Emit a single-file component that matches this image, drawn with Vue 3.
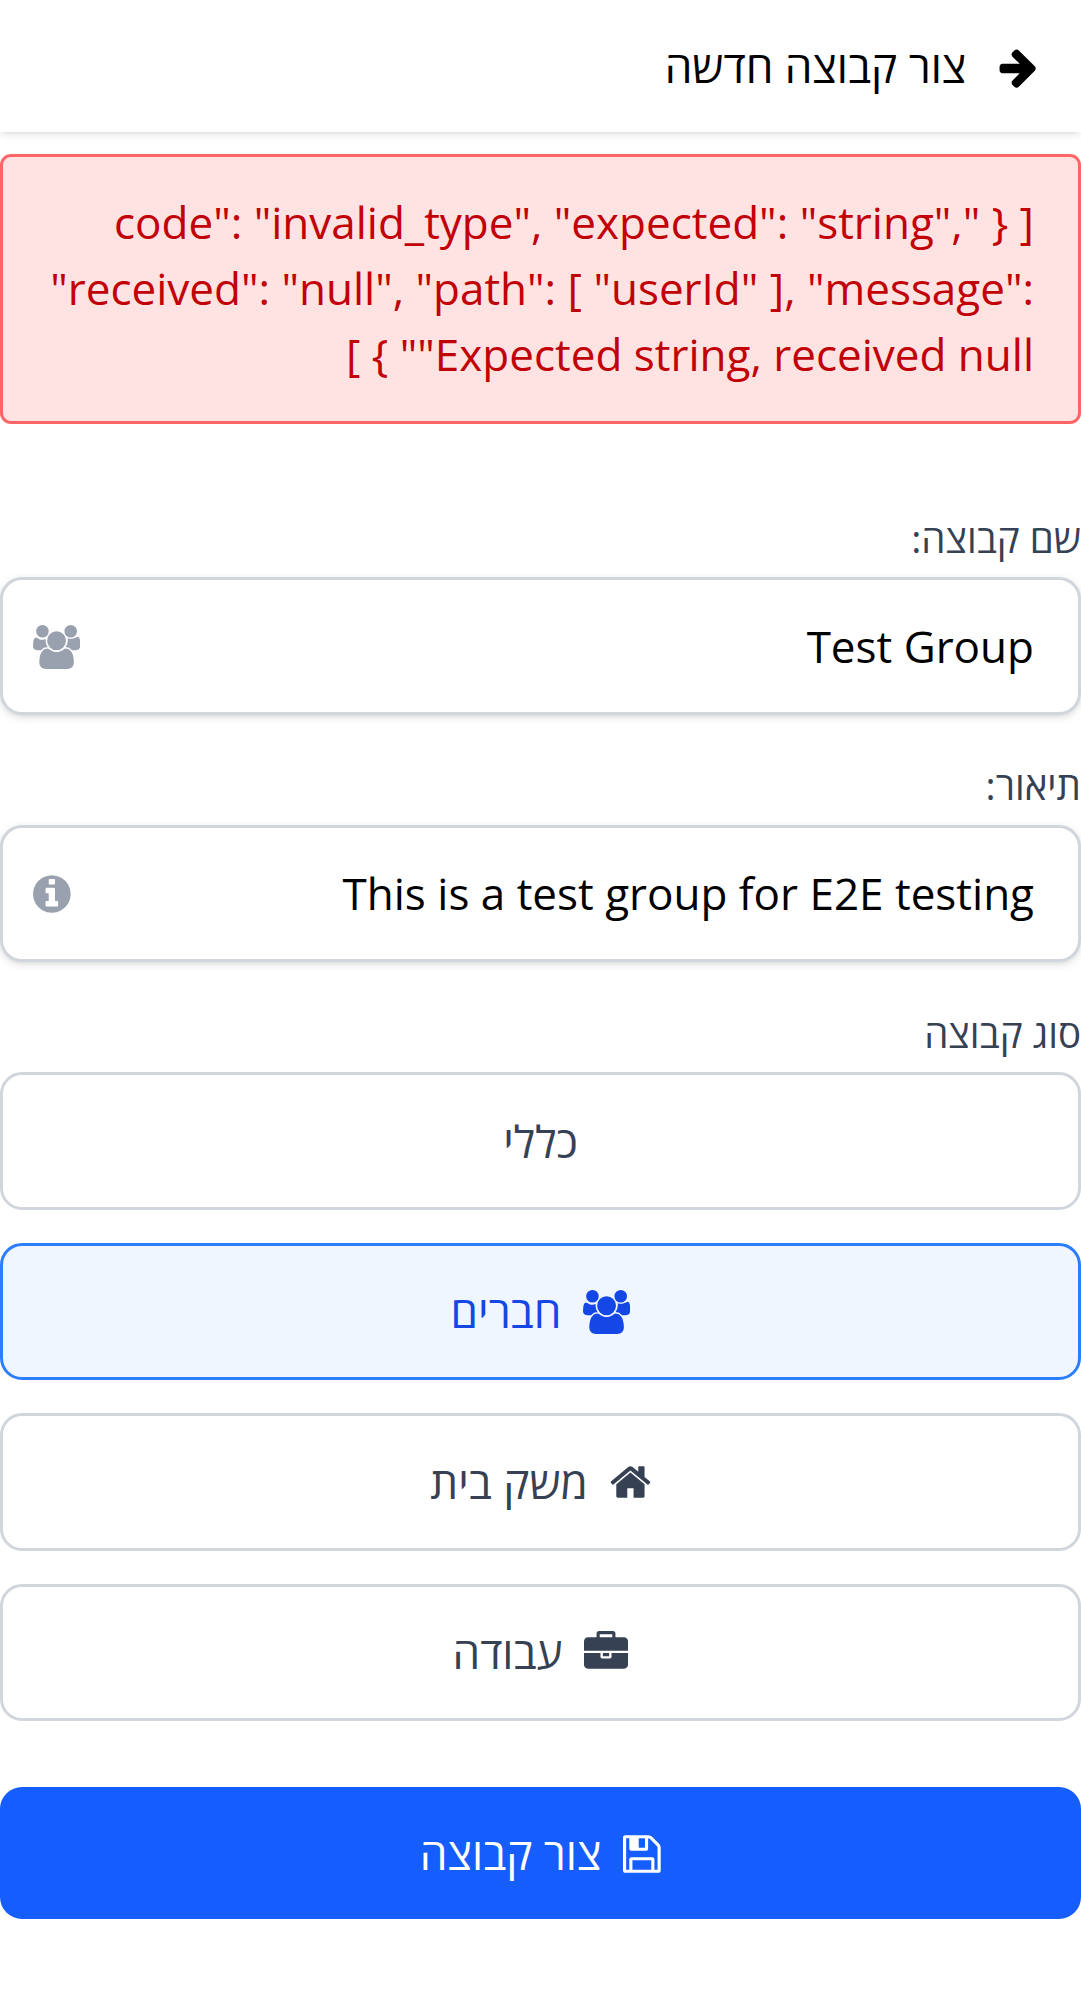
<script setup>
import { ref } from 'vue'

const error = `[
  {
    "code": "invalid_type",
    "expected": "string",
    "received": "null",
    "path": [ "userId" ],
    "message": "Expected string, received null"
  }
]`

const icons = {
  arrow: {
    box: '64 0 1536 1792',
    d: 'M1600 960q0 54-37 91l-651 651q-39 37-91 37-51 0-90-37l-75-75q-38-38-38-91t38-91l293-293h-704q-52 0-84.5-37.5t-32.5-90.5v-128q0-53 32.5-90.5t84.5-37.5h704l-293-294q-38-36-38-90t38-90l75-75q38-38 90-38 53 0 91 38l651 651q37 35 37 90z',
  },
  users: {
    box: '0 0 1920 1792',
    d: 'M593 896q-162 5-265 128h-134q-82 0-138-40.5t-56-118.5q0-353 124-353 6 0 43.5 21t97.5 42.5 119 21.5q67 0 133-23-5 37-5 66 0 159 93 290zm1071 637q0 120-73 189.5t-194 69.5h-874q-121 0-194-69.5t-73-189.5q0-53 3.5-103.5t14-109 26.5-108.5 43-97.5 62-81 85.5-53.5 111.5-20q10 0 43 21.5t73 48 107 48 135 21.5 135-21.5 107-48 73-48 43-21.5q61 0 111.5 20t85.5 53.5 62 81 43 97.5 26.5 108.5 14 109 3.5 103.5zm-1024-1277q0 106-75 181t-181 75-181-75-75-181 75-181 181-75 181 75 75 181zm704 384q0 159-112.5 271.5t-271.5 112.5-271.5-112.5-112.5-271.5 112.5-271.5 271.5-112.5 271.5 112.5 112.5 271.5zm576 225q0 78-56 118.5t-138 40.5h-134q-103-123-265-128 93-131 93-290 0-29-5-66 66 23 133 23 59 0 119-21.5t97.5-42.5 43.5-21q124 0 124 353zm-128-609q0 106-75 181t-181 75-181-75-75-181 75-181 181-75 181 75 75 181z',
  },
  info: {
    box: '128 0 1536 1792',
    d: 'M1152 1376v-160q0-14-9-23t-23-9h-96v-512q0-14-9-23t-23-9h-320q-14 0-23 9t-9 23v160q0 14 9 23t23 9h96v320h-96q-14 0-23 9t-9 23v160q0 14 9 23t23 9h448q14 0 23-9t9-23zm-128-896v-160q0-14-9-23t-23-9h-192q-14 0-23 9t-9 23v160q0 14 9 23t23 9h192q14 0 23-9t9-23zm640 416q0 209-103 385.5t-279.5 279.5-385.5 103-385.5-103-279.5-279.5-103-385.5 103-385.5 279.5-279.5 385.5-103 385.5 103 279.5 279.5 103 385.5z',
  },
  home: {
    box: '64 0 1664 1792',
    d: 'M1472 992v480q0 26-19 45t-45 19h-384v-384h-256v384h-384q-26 0-45-19t-19-45v-480q0-1 .5-3t.5-3l575-474 575 474q1 2 1 6zm223-69l-62 74q-8 9-21 11h-3q-13 0-21-7l-692-577-692 577q-12 8-24 7-13-2-21-11l-62-74q-8-10-7-23.5t11-21.5l719-599q32-26 76-26t76 26l244 204v-195q0-14 9-23t23-9h192q14 0 23 9t9 23v408l219 182q10 8 11 21.5t-7 23.5z',
  },
  briefcase: {
    box: '0 0 1792 1792',
    d: 'M640 256h512v-128h-512v128zm1152 640v480q0 66-47 113t-113 47h-1472q-66 0-113-47t-47-113v-480h672v160q0 26 19 45t45 19h320q26 0 45-19t19-45v-160h672zm-768 0v128h-256v-128h256zm768-480v384h-1792v-384q0-66 47-113t113-47h352v-160q0-40 28-68t68-28h576q40 0 68 28t28 68v160h352q66 0 113 47t47 113z',
  },
  save: {
    box: '128 0 1536 1792',
    d: 'M512 1536h768v-384h-768v384zm896 0h128v-896q0-14-10-38.5t-20-34.5l-281-281q-10-10-34-20t-39-10v416q0 40-28 68t-68 28h-576q-40 0-68-28t-28-68v-416h-128v1280h128v-416q0-40 28-68t68-28h832q40 0 68 28t28 68v416zm-384-928v-320q0-13-9.5-22.5t-22.5-9.5h-192q-13 0-22.5 9.5t-9.5 22.5v320q0 13 9.5 22.5t22.5 9.5h192q13 0 22.5-9.5t9.5-22.5zm640 32v928q0 40-28 68t-68 28h-1344q-40 0-68-28t-28-68v-1344q0-40 28-68t68-28h928q40 0 88 20t76 48l280 280q28 28 48 76t20 88z',
  },
}

const name = ref('Test Group')
const description = ref('This is a test group for E2E testing')
const selected = ref('friends')
const types = [
  { id: 'general', label: 'כללי' },
  { id: 'friends', label: 'חברים', icon: 'users' },
  { id: 'household', label: 'משק בית', icon: 'home' },
  { id: 'work', label: 'עבודה', icon: 'briefcase' },
]
</script>

<template>
  <div class="page" dir="rtl">
    <header class="header">
      <svg class="icon back" :viewBox="icons.arrow.box"><path :d="icons.arrow.d" /></svg>
      <span>צור קבוצה חדשה</span>
    </header>

    <div class="alert">{{ error }}</div>

    <form class="form" @submit.prevent>
      <div class="field">
        <label class="label" for="name">שם קבוצה:</label>
        <div class="input-box">
          <input id="name" v-model="name" class="input" type="text" />
          <svg class="icon muted group" :viewBox="icons.users.box"><path :d="icons.users.d" /></svg>
        </div>
      </div>

      <div class="field">
        <label class="label" for="description">תיאור:</label>
        <div class="input-box">
          <input id="description" v-model="description" class="input" type="text" />
          <svg class="icon muted" :viewBox="icons.info.box"><path :d="icons.info.d" /></svg>
        </div>
      </div>

      <div class="field">
        <span class="label">סוג קבוצה</span>
        <div class="types">
          <button
            v-for="t in types"
            :key="t.id"
            type="button"
            class="type"
            :class="{ active: selected === t.id }"
            @click="selected = t.id"
          >
            <svg v-if="t.icon" class="icon" :viewBox="icons[t.icon].box"><path :d="icons[t.icon].d" /></svg>
            <span class="caption">{{ t.label }}</span>
          </button>
        </div>
      </div>

      <button class="submit" type="submit">
        <svg class="icon" :viewBox="icons.save.box"><path :d="icons.save.d" /></svg>
        <span>צור קבוצה</span>
      </button>
    </form>
  </div>
</template>

<style>
body {
  margin: 0;
  background: #fff;
}
</style>

<style scoped>
.page,
.page * {
  box-sizing: border-box;
}

.page {
  height: 1999px;
  font-family: 'Open Sans', 'Noto Sans', sans-serif;
  font-size: 44px;
  line-height: 66px;
  color: #000;
  background: #fff;
}

.icon {
  height: 44px;
  width: auto;
  flex: none;
  margin-top: 1px;
  fill: currentColor;
}

.header {
  display: flex;
  align-items: center;
  gap: 31.5px;
  height: 132px;
  padding: 0 45.5px;
  background: #fff;
  box-shadow: 0 2.75px 8.25px rgb(0 0 0 / 0.1), 0 2.75px 5.5px -2.75px rgb(0 0 0 / 0.1);
}

.back {
  margin-top: 2px;
}

.alert {
  margin-top: 22px;
  height: 269.5px;
  padding: 32.25px 44px;
  border: 3px solid #ff6467;
  border-radius: 11px;
  background: #ffe2e2;
  color: #c10007;
}

.form {
  display: flex;
  flex-direction: column;
  gap: 43.7px;
  margin-top: 87.45px;
}

.label {
  display: block;
  margin-bottom: 11.3px;
  font-size: 38.5px;
  line-height: 55px;
  color: #364153;
}

.input-box {
  display: flex;
  align-items: center;
  height: 137.5px;
  padding: 0 44px 0 30px;
  border: 3px solid #d1d5dc;
  border-radius: 22px;
  background: #fff;
  box-shadow: 0 2.75px 8.25px rgb(0 0 0 / 0.1), 0 2.75px 5.5px -2.75px rgb(0 0 0 / 0.1);
}

.input {
  flex: 1;
  min-width: 0;
  height: 66px;
  margin-top: -0.6px;
  padding: 0;
  border: 0;
  outline: 0;
  background: transparent;
  font: inherit;
  color: inherit;
}

.muted {
  color: #99a1af;
}

.group {
  margin-top: 2px;
}

.types {
  display: flex;
  flex-direction: column;
  gap: 33px;
}

.type,
.submit {
  display: flex;
  align-items: center;
  justify-content: center;
  gap: 22px;
  width: 100%;
  padding: 0;
  border-radius: 22px;
  font: inherit;
}

.type {
  height: 137.5px;
  border: 3px solid #d1d5dc;
  background: #fff;
  color: #364153;
}

.type.active {
  border-color: #2b7fff;
  background: #eff6ff;
  color: #1447e6;
}

.caption {
  margin-top: -0.6px;
}

.submit {
  height: 132px;
  margin-top: 22.3px;
  border: 0;
  background: #155dfc;
  color: #fff;
}
</style>
